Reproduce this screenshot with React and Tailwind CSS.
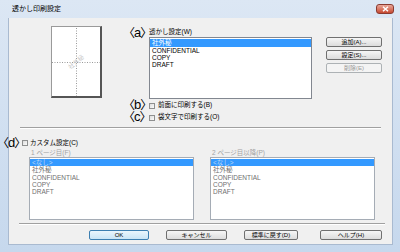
const FONT = "font-['Liberation_Sans','Noto_Sans_CJK_JP',sans-serif]"

const WATERMARKS = ['社外秘', 'CONFIDENTIAL', 'COPY', 'DRAFT']

function Mark({ ch }) {
  return (
    <span className="w-[20px] h-[11px] shrink-0 flex items-center overflow-visible text-black">
      <span className="-ml-[5px] font-['Noto_Sans_CJK_JP',sans-serif] text-[12px] leading-[11px]">〈</span>
      <span className="-ml-[1px] font-['Liberation_Sans',sans-serif] text-[13px] leading-[11px]">{ch}</span>
      <span className="-ml-[1px] -mr-[6px] font-['Noto_Sans_CJK_JP',sans-serif] text-[12px] leading-[11px]">〉</span>
    </span>
  )
}

function Check() {
  return <span className="block w-[6px] h-[6px] shrink-0 border border-[#8e8f8f] bg-gradient-to-br from-[#dcdcdc] to-[#fbfbfb]" />
}

function Btn({ children, disabled, primary, w = 'w-[56px]' }) {
  const cls = disabled
    ? 'border-[#adb2b5] bg-[#f4f4f4] text-[#9a9a9a]'
    : primary
      ? 'border-[#3c7fb1] bg-gradient-to-b from-[#eaf6fd] to-[#c9e5f6] text-black'
      : 'border-[#707070] bg-gradient-to-b from-[#f6f6f6] to-[#dcdcdc] text-black'
  return (
    <div className={`${w} h-[10px] rounded-[2px] border flex items-center justify-center text-[6px] leading-none ${cls}`}>
      {children}
    </div>
  )
}

function PagePreview() {
  return (
    <div className="w-[51px] h-[72px] bg-white border-l border-t border-[#9a9a9a] border-r-2 border-b-2 border-r-[#555] border-b-[#555]">
      <svg width="48" height="69" viewBox="0 0 48 69">
        <line x1="24.5" y1="1" x2="24.5" y2="69" stroke="#9a9a9a" strokeWidth="1" strokeDasharray="1 1.5" />
        <line x1="0" y1="35.5" x2="48" y2="35.5" stroke="#9a9a9a" strokeWidth="1" strokeDasharray="1 1.5" />
        <text x="24.5" y="37" fontSize="6" fill="#c4c4c4" textAnchor="middle" transform="rotate(-40 24.5 35.5)" fontFamily="Noto Sans CJK JP, sans-serif">社外秘</text>
      </svg>
    </div>
  )
}

function PageList({ label, items }) {
  return (
    <div className="flex flex-col">
      <span className="ml-[2px] text-[6.5px] leading-[7px] text-[#a3a3a3]">{label}</span>
      <div className="mt-[1px] w-[165px] h-[63px] bg-white border border-[#a5acb5] flex flex-col pt-[1px]">
        {items.map((t, i) => (
          <div
            key={t}
            className={`h-[7.3px] leading-[7.3px] text-[6.5px] px-[2px] ${i === 0 ? 'bg-[#3399ff] text-[#bcd8f5]' : 'text-[#6f6f6f]'}`}
          >
            {t}
          </div>
        ))}
      </div>
    </div>
  )
}

export default function App() {
  const pageItems = ['<なし>', ...WATERMARKS]

  return (
    <div className={`w-[400px] h-[252px] bg-gradient-to-b from-[#dce7f4] to-[#c6d8ed] flex flex-col ${FONT} select-none`}>
      {/* Title bar */}
      <div className="h-[18px] shrink-0 flex items-center pl-[12px] pr-[6px]">
        <span className="text-[7px] text-black">透かし印刷設定</span>
        <div className="ml-auto w-[18px] h-[10px] rounded-[3px] border border-[#8a3b31] bg-gradient-to-b from-[#e9a89b] to-[#c6472f] flex items-center justify-center">
          <svg width="7" height="6" viewBox="0 0 7 6">
            <path d="M1 0.8 L6 5.2 M6 0.8 L1 5.2" stroke="white" strokeWidth="1.5" />
          </svg>
        </div>
      </div>

      {/* Client area */}
      <div className="ml-[8px] mr-[7px] mb-[7px] flex-1 bg-[#f0f0f0] border-l border-r border-b border-[#a9bad0] flex flex-col">
        {/* Top section */}
        <div className="h-[109px] shrink-0 flex items-start">
          <div className="ml-[42px] mt-[8px]">
            <PagePreview />
          </div>

          <div className="ml-[26px] mt-[9px] w-[184px] flex flex-col">
            <div className="h-[10px] flex items-center">
              <Mark ch="a" />
              <span className="ml-[1px] text-[6.5px] leading-none">透かし設定(W)</span>
            </div>
            <div className="ml-[21px] w-[163px] h-[62px] bg-white border border-[#828790] flex flex-col pt-[1px]">
              {WATERMARKS.map((t, i) => (
                <div
                  key={t}
                  className={`h-[7px] leading-[7px] text-[6.5px] px-[2px] ${i === 0 ? 'bg-[#3399ff] text-white h-[8px] leading-[8px]' : 'text-black'}`}
                >
                  {t}
                </div>
              ))}
            </div>
            <div className="h-[11px] flex items-center">
              <Mark ch="b" />
              <span className="ml-[1px] mt-[2px]"><Check /></span>
              <span className="ml-[3px] mt-[2px] text-[6.5px] leading-none">前面に印刷する(B)</span>
            </div>
            <div className="mt-[1px] h-[11px] flex items-center">
              <Mark ch="c" />
              <span className="ml-[1px] mt-[2px]"><Check /></span>
              <span className="ml-[3px] mt-[2px] text-[6.5px] leading-none">袋文字で印刷する(O)</span>
            </div>
          </div>

          <div className="ml-[14px] mt-[19px] flex flex-col gap-[3px]">
            <Btn>追加(A)...</Btn>
            <Btn>設定(S)...</Btn>
            <Btn disabled>削除(E)</Btn>
          </div>
        </div>

        <div className="mx-[11px] border-t border-[#a0a0a0] border-b border-b-white" />

        {/* Custom settings */}
        <div className="mt-[8px] h-[11px] flex items-center -ml-[7px]">
          <Mark ch="d" />
          <span className="mt-[1px]"><Check /></span>
          <span className="ml-[2px] mt-[1px] text-[6.5px] leading-none">カスタム設定(C)</span>
        </div>

        <div className="mt-[1px] ml-[20px] flex gap-[16px]">
          <PageList label="1 ページ目(F)" items={pageItems} />
          <PageList label="2 ページ目以降(P)" items={pageItems} />
        </div>

        <div className="mt-[3px] ml-[10px] mr-[7px] border-t border-[#a0a0a0] border-b border-b-white" />

        {/* Footer buttons */}
        <div className="mt-[5px] flex items-center">
          <div className="ml-[80px]"><Btn primary w="w-[60px]">OK</Btn></div>
          <div className="ml-[17px]"><Btn w="w-[61px]">キャンセル</Btn></div>
          <div className="ml-[17px]"><Btn w="w-[54px]">標準に戻す(D)</Btn></div>
          <div className="ml-[22px]"><Btn w="w-[62px]">ヘルプ(H)</Btn></div>
        </div>
      </div>
    </div>
  )
}
